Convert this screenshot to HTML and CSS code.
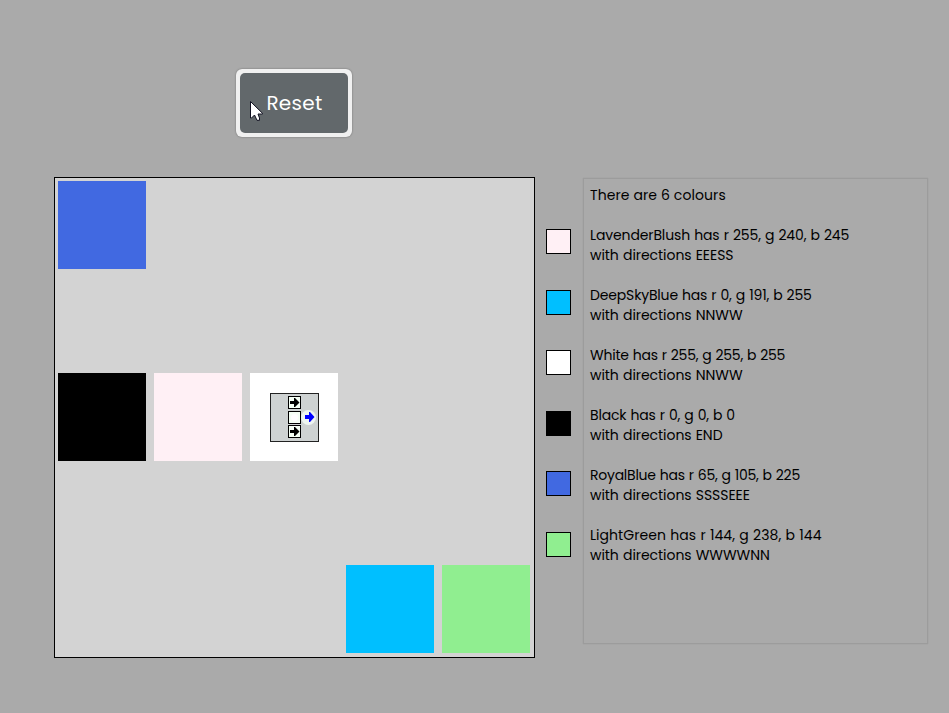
FILE: index.html
```html
<!DOCTYPE html>
<html lang="en">
<head>
<meta charset="utf-8">
<title>Colour directions</title>
<link rel="stylesheet" href="styles.css">
</head>
<body>
<main class="page">
  <header class="toolbar">
    <button class="reset" type="button"><span>Reset</span></button>
    <svg class="pointer" width="14" height="22" viewBox="0 0 14 22"><path d="M.5 .5V17H1.500L4.500 14L7 19.300H9.500V17L8 13H12.500V12.300Z" fill="#fff" stroke="#101020" stroke-width="1"/></svg>
  </header>
  <div class="content">
    <section class="board">
      <div class="cell royal r1 c1"></div>
      <div class="cell black r3 c1"></div>
      <div class="cell blush r3 c2"></div>
      <div class="cell white r3 c3">
        <svg width="49" height="49" viewBox="0 0 49 49">
          <rect x=".5" y=".5" width="48" height="48" fill="#ced2d2" stroke="#222"/>
          <g fill="#f5fff5" stroke="#000"><rect x="18.5" y="3.5" width="12" height="12"/><rect x="18.5" y="18.5" width="12" height="12"/><rect x="18.5" y="32.5" width="12" height="12"/></g>
          <circle cx="24.5" cy="24.5" r="3.5" fill="#fff"/>
          <circle cx="38.5" cy="24.5" r="7.5" fill="#eef5f0"/>
          <path d="M20 8h4V5h1l4.500 4.500l-4.500 4.500h-1v-3h-4zM20 37h4v-3h1l4.500 4.500l-4.500 4.500h-1v-3h-4z" fill="#000"/>
          <path d="M35 22h4v-3h1l4.500 5l-4.500 5h-1v-3h-4z" fill="#00f"/>
        </svg>
      </div>
      <div class="cell sky r5 c4"></div>
      <div class="cell green r5 c5"></div>
    </section>
    <div class="swatches">
      <i class="swatch blush"></i><i class="swatch sky"></i><i class="swatch white"></i><i class="swatch black"></i><i class="swatch royal"></i><i class="swatch green"></i>
    </div>
    <section class="report">
      <p><span class="t0">There are 6 colours</span></p>
      <p><span class="t1">LavenderBlush has r 255, g 240, b 245</span><span class="directions">with directions EEESS</span></p>
      <p><span class="t2">DeepSkyBlue has r 0, g 191, b 255</span><span class="directions">with directions NNWW</span></p>
      <p><span class="t3">White has r 255, g 255, b 255</span><span class="directions">with directions NNWW</span></p>
      <p><span class="t4">Black has r 0, g 0, b 0</span><span class="directions">with directions END</span></p>
      <p><span class="t5">RoyalBlue has r 65, g 105, b 225</span><span class="directions">with directions SSSSEEE</span></p>
      <p><span class="t6">LightGreen has r 144, g 238, b 144</span><span class="directions">with directions WWWWNN</span></p>
    </section>
  </div>
</main>
</body>
</html>
```
FILE: styles.css
```css
* { box-sizing: border-box; }
body { margin: 0; background: #aaa; color: #000; font-family: Poppins, Inter, sans-serif; }
.page { height: 713px; padding: 69px 21px 0 54px; overflow: hidden; }
.toolbar { position: relative; height: 108px; padding-left: 182px; }
.reset {
  display: flex; width: 116px; height: 68px; padding: 4px; border: 0; border-radius: 6px;
  background: #f0f0f0; box-shadow: 0 0 2px rgba(0, 0, 0, .4);
  color: #fff; font: 400 20px/30px Poppins, Inter, sans-serif; letter-spacing: .3px;
}
.reset span {
  display: flex; align-items: center; justify-content: center;
  width: 108px; height: 60px; padding-left: 1px; border-radius: 5px; background: #62686b;
}
.pointer { position: absolute; left: 196px; top: 32px; }
.content { display: flex; align-items: flex-start; }
.board {
  display: grid; grid-template: repeat(5, 88px) / repeat(5, 88px); gap: 8px;
  width: 481px; height: 481px; padding: 3px; border: 1px solid #000; background: #d3d3d3;
}
.cell { display: flex; align-items: center; justify-content: center; }
.r1 { grid-row: 1; } .r3 { grid-row: 3; } .r5 { grid-row: 5; }
.c1 { grid-column: 1; } .c2 { grid-column: 2; } .c3 { grid-column: 3; } .c4 { grid-column: 4; } .c5 { grid-column: 5; }
.royal { background: #4169e1; }
.black { background: #000; }
.blush { background: #fff0f5; }
.white { background: #fff; }
.sky { background: #00bfff; }
.green { background: #90ee90; }
.swatches {
  display: flex; flex-direction: column; justify-content: space-between;
  height: 328px; margin: 52px 12px 0 11px;
}
.swatch { width: 25px; height: 25px; border: 1px solid #000; }
.report {
  display: flex; flex-direction: column; gap: 20px;
  width: 345px; height: 466px; margin-top: 1px; padding: 6px 5px 0 6px;
  border: 1px solid #9c9c9c; box-shadow: 0 0 1px rgba(0, 0, 0, .12);
  font-size: 14px; line-height: 20px; white-space: nowrap;
}
.report p { margin: 0; }
.report span { display: block; }
.directions { letter-spacing: -.05px; word-spacing: .5px; }
.t0 { letter-spacing: .1px; }
.t1 { letter-spacing: -.12px; word-spacing: .5px; }
.t2 { letter-spacing: -.16px; word-spacing: .5px; }
.t3 { letter-spacing: -.23px; word-spacing: .5px; }
.t4 { letter-spacing: -.16px; word-spacing: .5px; }
.t5 { letter-spacing: -.24px; word-spacing: .5px; }
.t6 { letter-spacing: .05px; word-spacing: .5px; }
```
